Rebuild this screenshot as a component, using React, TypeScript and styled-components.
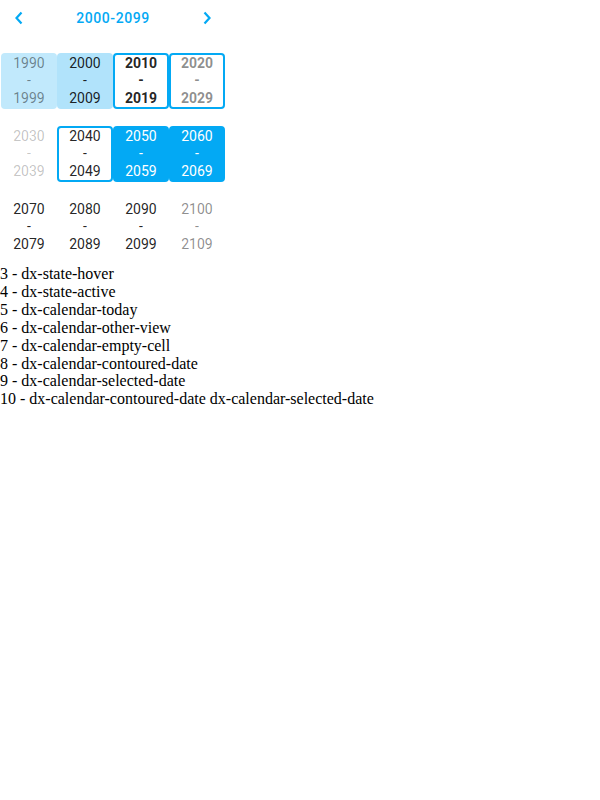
import React from "react";
import styled, { createGlobalStyle, css } from "styled-components";

const Global = createGlobalStyle`
  html, body { margin: 0; padding: 0; background: #fff; }
  body { font-family: "Liberation Serif", "Times New Roman", serif; font-size: 16px; }
`;

const Calendar = styled.div`
  width: 224px;
  padding: 0 1px;
  font-family: Roboto, "Noto Sans", sans-serif;
  font-size: 14px;
  color: rgba(0, 0, 0, 0.87);
`;

const Navigator = styled.div`
  display: flex;
  align-items: center;
  justify-content: space-between;
  height: 36px;
`;

const NavButton = styled.button`
  width: 36px;
  height: 36px;
  border: none;
  background: transparent;
  padding: 0;
  display: flex;
  align-items: center;
  justify-content: center;
  color: #03a9f4;
  cursor: pointer;
`;

const Caption = styled.div`
  color: #03a9f4;
  font-weight: 500;
  font-size: 14px;
  letter-spacing: 0.04em;
`;

const Grid = styled.div`
  display: grid;
  grid-template-columns: repeat(4, 56px);
  grid-auto-rows: 56px;
  row-gap: 17px;
  margin-top: 17px;
`;

type Kind =
  | "hover"
  | "active"
  | "today"
  | "otherToday"
  | "empty"
  | "contoured"
  | "selected"
  | "both"
  | "normal"
  | "other";

const Cell = styled.div<{ $kind: Kind }>`
  box-sizing: border-box;
  display: flex;
  flex-direction: column;
  align-items: center;
  justify-content: center;
  border-radius: 4px;
  line-height: 17.5px;
  border: 2px solid transparent;
  ${({ $kind }) => {
    switch ($kind) {
      case "hover":
        return css`background: #c1e9fc; color: rgba(0,0,0,0.45);`;
      case "active":
        return css`background: #b1e3fb; color: rgba(0,0,0,0.87);`;
      case "today":
        return css`border-color: #03a9f4; font-weight: 700;`;
      case "otherToday":
        return css`border-color: #03a9f4; font-weight: 700; color: rgba(0,0,0,0.45);`;
      case "empty":
        return css`color: rgba(0,0,0,0.24);`;
      case "contoured":
        return css`border-color: #03a9f4;`;
      case "selected":
        return css`background: #03a9f4; color: #fff;`;
      case "both":
        return css`background: #03a9f4; border-color: #03a9f4; color: #fff;`;
      case "other":
        return css`color: rgba(0,0,0,0.45);`;
      default:
        return css``;
    }
  }}
`;

const Legend = styled.div`
  margin-top: 10px;
  line-height: 17.9px;
`;

const Chevron = ({ dir }: { dir: "left" | "right" }) => (
  <svg width="10" height="14" viewBox="0 0 10 14" fill="none">
    <path
      d={dir === "left" ? "M7.5 1.5 L2.5 7 L7.5 12.5" : "M2.5 1.5 L7.5 7 L2.5 12.5"}
      stroke="currentColor"
      strokeWidth="2.2"
    />
  </svg>
);

const cells: { start: number; kind: Kind }[] = [
  { start: 1990, kind: "hover" },
  { start: 2000, kind: "active" },
  { start: 2010, kind: "today" },
  { start: 2020, kind: "otherToday" },
  { start: 2030, kind: "empty" },
  { start: 2040, kind: "contoured" },
  { start: 2050, kind: "selected" },
  { start: 2060, kind: "both" },
  { start: 2070, kind: "normal" },
  { start: 2080, kind: "normal" },
  { start: 2090, kind: "normal" },
  { start: 2100, kind: "other" },
];

const legend = [
  "3 - dx-state-hover",
  "4 - dx-state-active",
  "5 - dx-calendar-today",
  "6 - dx-calendar-other-view",
  "7 - dx-calendar-empty-cell",
  "8 - dx-calendar-contoured-date",
  "9 - dx-calendar-selected-date",
  "10 - dx-calendar-contoured-date dx-calendar-selected-date",
];

export default function App() {
  return (
    <>
      <Global />
      <Calendar>
        <Navigator>
          <NavButton aria-label="previous">
            <Chevron dir="left" />
          </NavButton>
          <Caption>2000-2099</Caption>
          <NavButton aria-label="next">
            <Chevron dir="right" />
          </NavButton>
        </Navigator>
        <Grid>
          {cells.map((c) => (
            <Cell key={c.start} $kind={c.kind}>
              <span>{c.start}</span>
              <span>-</span>
              <span>{c.start + 9}</span>
            </Cell>
          ))}
        </Grid>
      </Calendar>
      <Legend>
        {legend.map((l) => (
          <div key={l}>{l}</div>
        ))}
      </Legend>
    </>
  );
}
